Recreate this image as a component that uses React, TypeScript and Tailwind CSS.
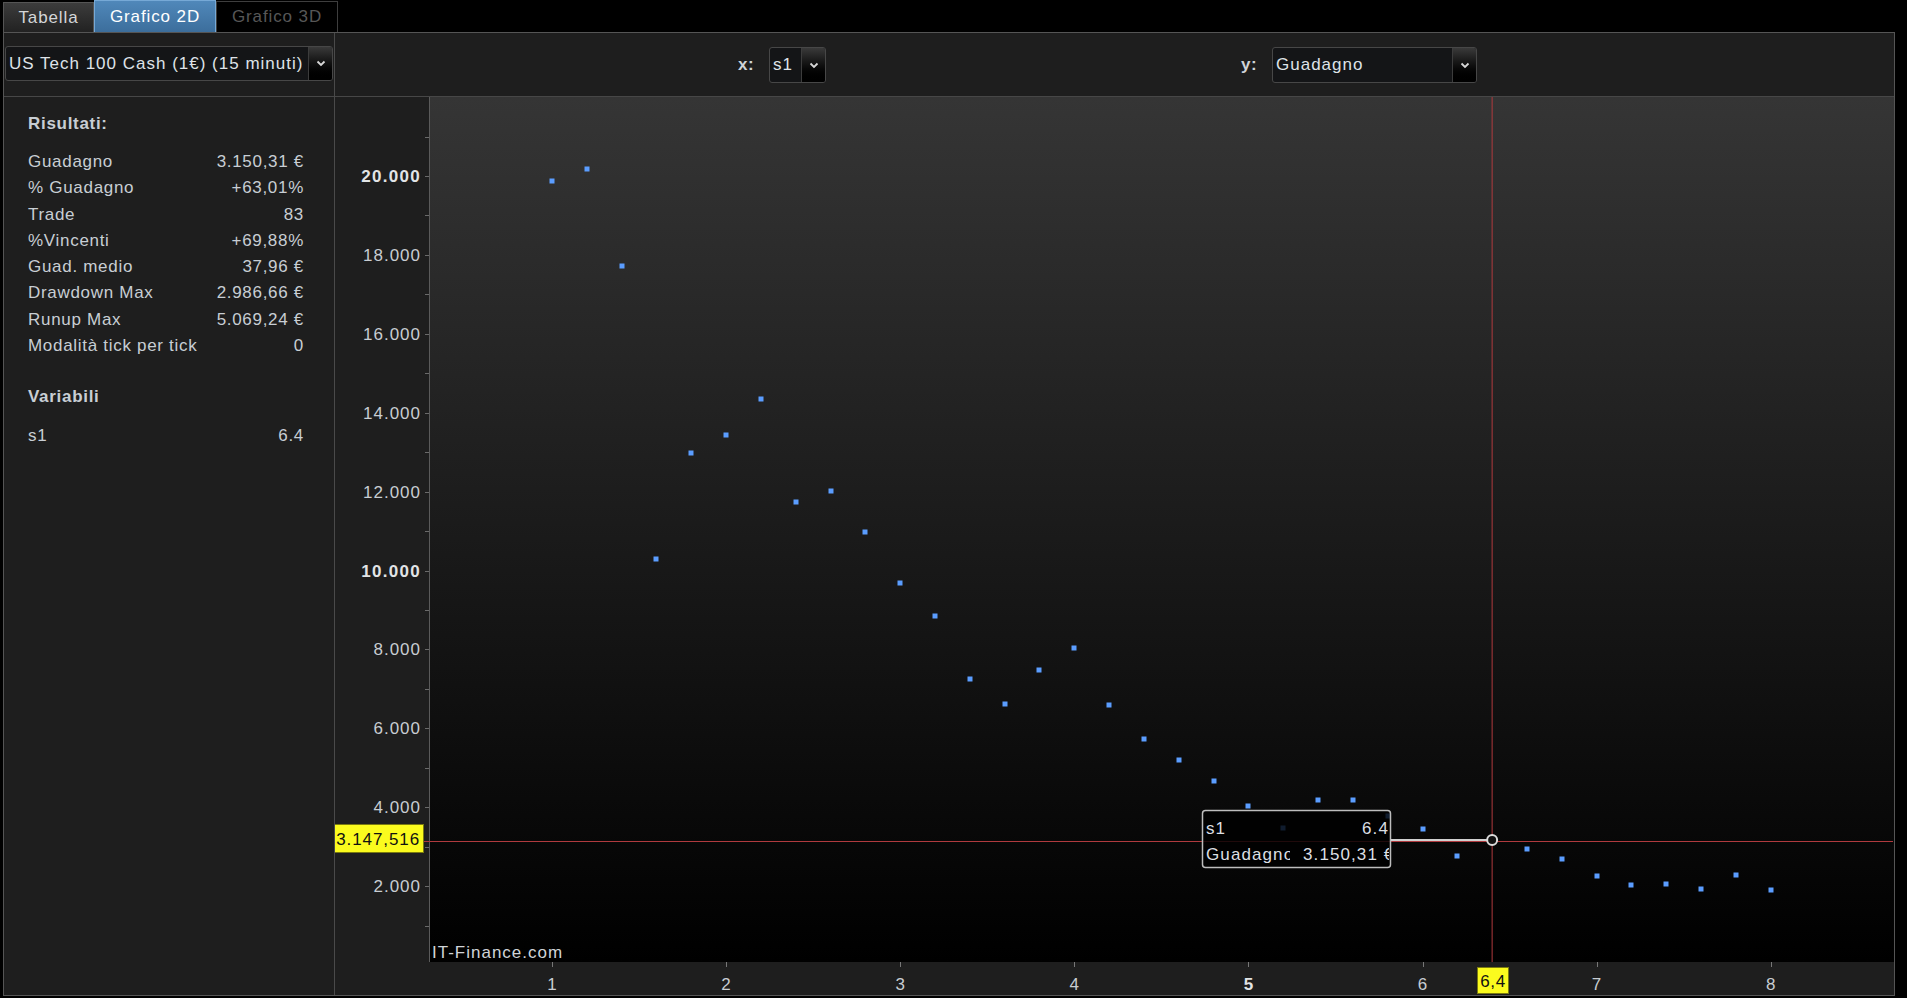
import React from 'react';

const FONT = { fontFamily: '"Liberation Sans", Arial, sans-serif' };

const RESULTS: [string, string][] = [
  ['Guadagno', '3.150,31 €'],
  ['% Guadagno', '+63,01%'],
  ['Trade', '83'],
  ['%Vincenti', '+69,88%'],
  ['Guad. medio', '37,96 €'],
  ['Drawdown Max', '2.986,66 €'],
  ['Runup Max', '5.069,24 €'],
  ['Modalità tick per tick', '0'],
];

// guadagno per s1 = 1.0, 1.2, ... 8.0
const POINTS = [
  19870, 20180, 17720, 10290, 12980, 13430, 14350, 11740, 12010, 10970, 9680, 8850,
  7250, 6620, 7480, 8040, 6590, 5730, 5200, 4660, 4030, 3470, 4180, 4180,
  3780, 3450, 2760, 3150, 2940, 2690, 2260, 2030, 2050, 1930, 2280, 1900,
];

const W = 1559;
const H = 898;
const PLOT_L = 94;
const PLOT_B = 865;
const X = (v: number) => 217 + (v - 1) * 174.1;
const Y = (v: number) => 868 - v * 0.03945;

function Chevron() {
  return (
    <svg width="10" height="7" viewBox="0 0 10 7">
      <polyline points="1.5,1.5 5,5 8.5,1.5" fill="none" stroke="#d8d8d8" strokeWidth="1.8" />
    </svg>
  );
}

function Select({ value, className }: { value: string; className: string }) {
  return (
    <div className={`flex border border-[#474747] rounded-[3px] bg-[#141517] overflow-hidden ${className}`}>
      <div className="flex-1 flex items-center pl-[3px] text-[17px] tracking-[1px] text-[#dfe3e8] whitespace-nowrap overflow-hidden">
        {value}
      </div>
      <div className="w-[24px] flex items-center justify-center border-l border-[#3c3c3c] bg-gradient-to-b from-[#3a3a3a] to-[#000]">
        <Chevron />
      </div>
    </div>
  );
}

function Chart() {
  const yTicks = Array.from({ length: 21 }, (_, i) => (i + 1) * 1000);
  const yLabels = Array.from({ length: 10 }, (_, i) => (i + 1) * 2000);
  const fmt = (v: number) => `${v / 1000}.000`;
  const cx = X(6.4);
  const cy = 744;

  return (
    <svg width={W} height={H} className="block" style={FONT}>
      <defs>
        <linearGradient id="plotbg" x1="0" y1="0" x2="0" y2="1">
          <stop offset="0" stopColor="#353535" />
          <stop offset="1" stopColor="#000" />
        </linearGradient>
        <clipPath id="tipclip">
          <rect x="868" y="714" width="186" height="56" />
        </clipPath>
        <clipPath id="tipname">
          <rect x="868" y="714" width="87" height="56" />
        </clipPath>
      </defs>

      <rect x="0" y="0" width={W} height={H} fill="#1e1e1e" />
      <rect x={PLOT_L} y="0" width={W - PLOT_L} height={PLOT_B} fill="url(#plotbg)" />
      <line x1={PLOT_L + 0.5} y1="0" x2={PLOT_L + 0.5} y2={PLOT_B} stroke="#5a5a5a" />

      {yTicks.map((v) => (
        <line key={v} x1="90" x2={PLOT_L} y1={Math.round(Y(v)) + 0.5} y2={Math.round(Y(v)) + 0.5} stroke="#6a6a6a" />
      ))}
      {yLabels.map((v) => (
        <text
          key={v}
          x="86"
          y={Y(v) + 6}
          textAnchor="end"
          fontSize="17"
          letterSpacing={v % 10000 === 0 ? 1.3 : 1}
          fontWeight={v % 10000 === 0 ? 700 : 400}
          fill={v % 10000 === 0 ? '#e2e4e6' : '#c8cdd2'}
        >
          {fmt(v)}
        </text>
      ))}

      {[1, 2, 3, 4, 5, 6, 7, 8].map((v) => (
        <g key={v}>
          <line x1={Math.round(X(v)) + 0.5} x2={Math.round(X(v)) + 0.5} y1={PLOT_B} y2={PLOT_B + 5} stroke="#777" />
          <text
            x={X(v)}
            y="893"
            textAnchor="middle"
            fontSize="17"
            fontWeight={v === 5 ? 700 : 400}
            fill={v === 5 ? '#e2e4e6' : '#c8cdd2'}
          >
            {v}
          </text>
        </g>
      ))}

      {POINTS.map((v, i) => (
        <rect key={i} x={Math.round(X(1 + i * 0.2)) - 2.5} y={Math.round(Y(v)) - 2.5} width="5" height="5" fill="#5b9dff" />
      ))}

      <line x1="89" x2={W - 1} y1={cy + 0.5} y2={cy + 0.5} stroke="#b03a3e" />
      <line x1={cx} x2={cx} y1="0" y2={PLOT_B} stroke="#b03a3e" />

      <rect x="867.5" y="713.5" width="188" height="57" rx="3" fill="#000" fillOpacity="0.82" stroke="#bdbdbd" strokeWidth="1.5" />
      <g fontSize="17" letterSpacing="1.1" fill="#dcdfe3">
        <text x="871" y="737">s1</text>
        <text x="1054" y="737" textAnchor="end">6.4</text>
        <g clipPath="url(#tipname)">
          <text x="871" y="763">Guadagno</text>
        </g>
        <g clipPath="url(#tipclip)">
          <text x="968" y="763">3.150,31 €</text>
        </g>
      </g>
      <line x1="1056" x2={cx - 5} y1={cy - 1} y2={cy - 1} stroke="#d0d0d0" strokeWidth="2" />
      <circle cx={cx} cy={cy - 1} r="5" fill="#111" stroke="#dcdcdc" strokeWidth="2" />

      <text x="97" y="861" fontSize="17" letterSpacing="1" fill="#d0d4d8">IT-Finance.com</text>

      <rect x="-0.5" y="727.5" width="89" height="28" fill="#fbfb1e" stroke="#7a7a10" />
      <text x="85" y="748" textAnchor="end" fontSize="17" letterSpacing="0.9" fill="#111">3.147,516</text>

      <rect x="1142.5" y="870.5" width="31" height="26" fill="#fbfb1e" stroke="#7a7a10" />
      <text x="1158" y="890" textAnchor="middle" fontSize="17" letterSpacing="0.6" fill="#111">6,4</text>
    </svg>
  );
}

export default function App() {
  return (
    <div className="w-[1907px] h-[998px] bg-black overflow-hidden" style={FONT}>
      {/* Tabs */}
      <div className="flex h-[32px] pl-[3px] items-end">
        <div className="w-[91px] h-[30px] flex items-center justify-center border border-b-0 border-[#555] bg-gradient-to-b from-[#3c3c3c] to-[#222] text-[17px] tracking-[0.9px] text-[#d4d6d8]">
          Tabella
        </div>
        <div className="w-[122px] h-[32px] flex items-center justify-center border border-b-0 border-[#76a9d6] bg-gradient-to-b from-[#5088ba] to-[#3c6e9c] text-[17px] tracking-[0.9px] text-white">
          Grafico 2D
        </div>
        <div className="w-[122px] h-[31px] flex items-center justify-center border border-b-0 border-[#3e3e3e] bg-black text-[17px] tracking-[0.9px] text-[#575757]">
          Grafico 3D
        </div>
      </div>

      {/* Main panel */}
      <div className="ml-[3px] w-[1892px] h-[964px] border border-[#555] flex bg-[#1e1e1e]">
        {/* Left column */}
        <div className="w-[331px] border-r border-[#4a4a4a] flex flex-col">
          <div className="h-[64px] border-b border-[#474747] pt-[13px] pl-[1px]">
            <Select value="US Tech 100 Cash (1€) (15 minuti)" className="w-[328px] h-[35px]" />
          </div>
          <div className="pl-[24px] pr-[30px] pt-[14px] text-[17px] tracking-[0.7px] text-[#c8ced4]">
            <div className="leading-[26px] font-bold">Risultati:</div>
            <div className="mt-[12px]">
              {RESULTS.map(([k, v]) => (
                <div key={k} className="flex justify-between leading-[26.3px]">
                  <span>{k}</span>
                  <span>{v}</span>
                </div>
              ))}
            </div>
            <div className="mt-[25px] leading-[26px] font-bold">Variabili</div>
            <div className="mt-[13px] flex justify-between leading-[26px]">
              <span>s1</span>
              <span>6.4</span>
            </div>
          </div>
        </div>

        {/* Right column */}
        <div className="flex-1 flex flex-col">
          <div className="h-[64px] border-b border-[#474747] flex items-start pt-[14px] text-[17px] tracking-[0.6px] text-[#cfd3d7]">
            <span className="ml-[403px] w-[31px] h-[36px] flex items-center font-bold">x:</span>
            <Select value="s1" className="w-[57px] h-[36px]" />
            <span className="ml-[415px] w-[31px] h-[36px] flex items-center font-bold">y:</span>
            <Select value="Guadagno" className="w-[205px] h-[36px]" />
          </div>
          <Chart />
        </div>
      </div>
    </div>
  );
}
